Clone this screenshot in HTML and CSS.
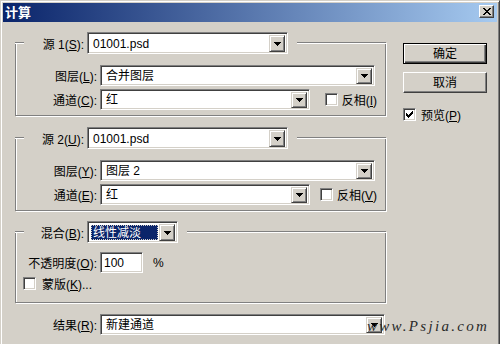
FILE: index.html
```html
<!DOCTYPE html>
<html>
<head>
<meta charset="utf-8">
<link rel="stylesheet" href="styles.css">
</head>
<body>
<div class="window">
  <div class="titlebar">
    <span class="title">计算</span>
    <span class="close"><svg width="8" height="7" viewBox="0 0 8 7"><path d="M0 0h2v1H0zM6 0h2v1H6zM1 1h2v1H1zM5 1h2v1H5zM2 2h4v1H2zM3 3h2v1H3zM2 4h4v1H2zM1 5h2v1H1zM5 5h2v1H5zM0 6h2v1H0zM6 6h2v1H6z"/></svg></span>
  </div>
  <div class="content">
    <div class="left">
      <div class="group g1">
        <div class="ghead">
          <span class="seg corner"></span>
          <span class="glabel">源 1(<u>S</u>):</span>
          <div class="combo head-combo w-src"><div class="field">01001.psd</div><span class="ddbtn"><svg width="7" height="4" viewBox="0 0 7 4"><path d="M0 0h7v1H0zM1 1h5v1H1zM2 2h3v1H2zM3 3h1v1H3z"/></svg></span></div>
          <span class="seg rest"></span>
        </div>
        <div class="row r1"><span class="label">图层(<u>L</u>):</span><div class="combo w-layer"><div class="field">合并图层</div><span class="ddbtn"><svg width="7" height="4" viewBox="0 0 7 4"><path d="M0 0h7v1H0zM1 1h5v1H1zM2 2h3v1H2zM3 3h1v1H3z"/></svg></span></div></div>
        <div class="row r2"><span class="label">通道(<u>C</u>):</span><div class="combo w-chan"><div class="field">红</div><span class="ddbtn"><svg width="7" height="4" viewBox="0 0 7 4"><path d="M0 0h7v1H0zM1 1h5v1H1zM2 2h3v1H2zM3 3h1v1H3z"/></svg></span></div><span class="check"><span class="box"></span><span class="ctext">反相(<u>I</u>)</span></span></div>
      </div>

      <div class="group g2">
        <div class="ghead">
          <span class="seg corner"></span>
          <span class="glabel">源 2(<u>U</u>):</span>
          <div class="combo head-combo w-src"><div class="field">01001.psd</div><span class="ddbtn"><svg width="7" height="4" viewBox="0 0 7 4"><path d="M0 0h7v1H0zM1 1h5v1H1zM2 2h3v1H2zM3 3h1v1H3z"/></svg></span></div>
          <span class="seg rest"></span>
        </div>
        <div class="row r1"><span class="label">图层(<u>Y</u>):</span><div class="combo w-layer"><div class="field">图层 2</div><span class="ddbtn"><svg width="7" height="4" viewBox="0 0 7 4"><path d="M0 0h7v1H0zM1 1h5v1H1zM2 2h3v1H2zM3 3h1v1H3z"/></svg></span></div></div>
        <div class="row r2"><span class="label">通道(<u>E</u>):</span><div class="combo w-chan"><div class="field">红</div><span class="ddbtn"><svg width="7" height="4" viewBox="0 0 7 4"><path d="M0 0h7v1H0zM1 1h5v1H1zM2 2h3v1H2zM3 3h1v1H3z"/></svg></span></div><span class="check"><span class="box"></span><span class="ctext">反相(<u>V</u>)</span></span></div>
      </div>

      <div class="group g3">
        <div class="ghead">
          <span class="seg corner"></span>
          <span class="glabel">混合(<u>B</u>):</span>
          <div class="combo head-combo w-blend"><div class="field sel"><span class="hl">线性减淡</span></div><span class="ddbtn"><svg width="7" height="4" viewBox="0 0 7 4"><path d="M0 0h7v1H0zM1 1h5v1H1zM2 2h3v1H2zM3 3h1v1H3z"/></svg></span></div>
          <span class="seg rest"></span>
        </div>
        <div class="row r-op"><span class="label">不透明度(<u>O</u>):</span><div class="input">100</div><span class="pct">%</span></div>
        <div class="row r-mask"><span class="box"></span><span class="mask-text">蒙版(<u>K</u>)...</span></div>
      </div>

      <div class="row r-result"><span class="label result-label">结果(<u>R</u>):</span><div class="combo w-result"><div class="field">新建通道</div><span class="ddbtn"><svg width="7" height="4" viewBox="0 0 7 4"><path d="M0 0h7v1H0zM1 1h5v1H1zM2 2h3v1H2zM3 3h1v1H3z"/></svg></span></div></div>
    </div>

    <div class="right">
      <div class="btn default">确定</div>
      <div class="btn cancel">取消</div>
      <div class="preview"><span class="box checked"><svg width="7" height="7" viewBox="0 0 7 7"><path d="M6 0h1v1H6zM5 1h2v1H5zM0 2h1v1H0zM4 2h3v1H4zM0 3h2v1H0zM3 3h3v1H3zM0 4h5v1H0zM1 5h3v1H1zM2 6h1v1H2z"/></svg></span><span class="ctext">预览(<u>P</u>)</span></div>
    </div>
  </div>
  <div class="watermark">www.Psjia.com</div>
</div>
</body>
</html>
```

FILE: styles.css
```css
html, body {
  margin: 0;
  padding: 0;
  background: #d4d0c8;
}

body {
  font-family: "Liberation Sans", "Noto Sans CJK SC", sans-serif;
  font-size: 12px;
  color: #000;
}

u {
  text-decoration: underline;
  text-underline-offset: 1px;
}

.window {
  position: relative;
  width: 500px;
  height: 344px;
  box-sizing: border-box;
  border-top: 1px solid #d4d0c8;
  border-left: 1px solid #d4d0c8;
  border-right: 1px solid #404040;
  box-shadow: inset 1px 1px 0 #fff, inset -1px 0 0 #808080;
  padding: 2px 2px 0 2px;
  background: #d4d0c8;
  overflow: hidden;
}

.titlebar {
  height: 19px;
  display: flex;
  justify-content: space-between;
  align-items: flex-start;
  background: linear-gradient(to right, #0a246a, #a6caf0);
  padding: 0 3px 0 2px;
}

.title {
  color: #fff;
  font-weight: bold;
  font-size: 13px;
  line-height: 19px;
}

.close {
  margin-top: 2px;
  width: 15px;
  height: 13px;
  box-sizing: border-box;
  background: #d4d0c8;
  border: 1px solid;
  border-color: #fff #404040 #404040 #fff;
  box-shadow: inset -1px -1px 0 #808080;
  display: flex;
  align-items: center;
  justify-content: center;
}

.close svg { display: block; }

.content {
  display: flex;
  align-items: flex-start;
  padding-left: 12px;
}

.left {
  width: 371px;
  display: flex;
  flex-direction: column;
  padding-top: 20px;
}

.right {
  width: 84px;
  margin-left: 17px;
  padding-top: 21px;
  display: flex;
  flex-direction: column;
}

/* group boxes */
.group {
  display: flex;
  flex-direction: column;
  border: 1px solid #808080;
  border-top: 0;
  box-shadow: inset 1px 0 0 #fff, 1px 1px 0 #fff;
  padding-bottom: 5px;
}

.g2 { margin-top: 21px; }
.g3 { margin-top: 20px; padding-bottom: 12px; }

.ghead {
  display: flex;
  align-items: center;
  height: 22px;
  margin: -10px -1px 0 -1px;
}

.seg {
  align-self: flex-start;
  margin-top: 10px;
  height: 2px;
  background: linear-gradient(#808080 0 1px, #fff 1px 2px);
}

.corner { width: 9px; flex: none; }
.rest { flex: 1; margin-left: 9px; }

.glabel {
  width: 60px;
  flex: none;
  text-align: right;
  margin-right: 3px;
  white-space: nowrap;
}

/* rows */
.row {
  display: flex;
  align-items: center;
  height: 21px;
  padding-right: 8px;
}

.r1 { margin-top: 11px; }
.r2 { margin-top: 3px; }
.r-op { margin-top: 9px; }
.r-mask { margin-top: 4px; height: 13px; padding-left: 7px; }
.r-result { margin-top: 10px; height: 22px; }

.label {
  width: 81px;
  flex: none;
  text-align: right;
  margin-right: 3px;
  white-space: nowrap;
}

.result-label { width: 82px; }

/* combo box */
.combo {
  height: 21px;
  box-sizing: border-box;
  display: flex;
  background: #fff;
  border: 1px solid;
  border-color: #808080 #fff #fff #808080;
  box-shadow: inset 1px 1px 0 #404040, inset -1px -1px 0 #d4d0c8;
  padding: 2px 2px 1px 2px;
  flex: none;
}

.head-combo { height: 22px; }

.w-src { width: 201px; }
.w-layer { width: 275px; }
.w-chan { width: 210px; }
.w-blend { width: 91px; }
.w-result { width: 285px; }

.field {
  flex: 1;
  display: flex;
  align-items: center;
  padding-left: 3px;
  line-height: 1;
  white-space: nowrap;
  overflow: hidden;
}

.field.sel {
  padding: 1px 1px 1px 1px;
  align-items: stretch;
}

.hl {
  flex: 1;
  background: #0a246a;
  color: #fff;
  display: flex;
  align-items: center;
  padding-left: 2px;
  outline: 1px dotted #d4d0c8;
  outline-offset: -1px;
}

.ddbtn {
  width: 16px;
  flex: none;
  box-sizing: border-box;
  background: #d4d0c8;
  border: 1px solid;
  border-color: #d4d0c8 #404040 #404040 #d4d0c8;
  box-shadow: inset 1px 1px 0 #fff, inset -1px -1px 0 #808080;
  display: flex;
  align-items: center;
  justify-content: center;
}

.ddbtn svg { display: block; }

/* checkbox */
.box {
  width: 13px;
  height: 13px;
  box-sizing: border-box;
  flex: none;
  background: #fff;
  border: 1px solid;
  border-color: #808080 #fff #fff #808080;
  box-shadow: inset 1px 1px 0 #404040, inset -1px -1px 0 #d4d0c8;
  display: flex;
  align-items: center;
  justify-content: center;
}

.box svg { display: block; }

.check {
  margin-left: auto;
  display: flex;
  align-items: center;
  gap: 4px;
  white-space: nowrap;
}

.ctext { white-space: nowrap; }

.mask-text { margin-left: 6px; }

/* input */
.input {
  width: 43px;
  height: 21px;
  box-sizing: border-box;
  background: #fff;
  border: 1px solid;
  border-color: #808080 #fff #fff #808080;
  box-shadow: inset 1px 1px 0 #404040, inset -1px -1px 0 #d4d0c8;
  display: flex;
  align-items: center;
  padding-left: 3px;
  line-height: 1;
}

.pct { margin-left: 10px; }

/* buttons */
.btn {
  height: 21px;
  box-sizing: border-box;
  display: flex;
  align-items: center;
  justify-content: center;
  background: #d4d0c8;
  line-height: 1;
}

.btn.default {
  border: 1px solid #000;
  box-shadow: inset 1px 1px 0 #fff, inset -1px -1px 0 #404040, inset -2px -2px 0 #808080;
}

.btn.cancel {
  margin-top: 8px;
  border: 1px solid;
  border-color: #fff #404040 #404040 #fff;
  box-shadow: inset -1px -1px 0 #808080;
}

.preview {
  margin-top: 15px;
  display: flex;
  align-items: center;
  gap: 5px;
  height: 13px;
  white-space: nowrap;
}

.watermark {
  position: absolute;
  left: 366px;
  top: 316px;
  font-family: "Liberation Serif", serif;
  font-style: italic;
  font-size: 15px;
  line-height: 18px;
  letter-spacing: 2.3px;
  color: #2a2a2a;
}
```
